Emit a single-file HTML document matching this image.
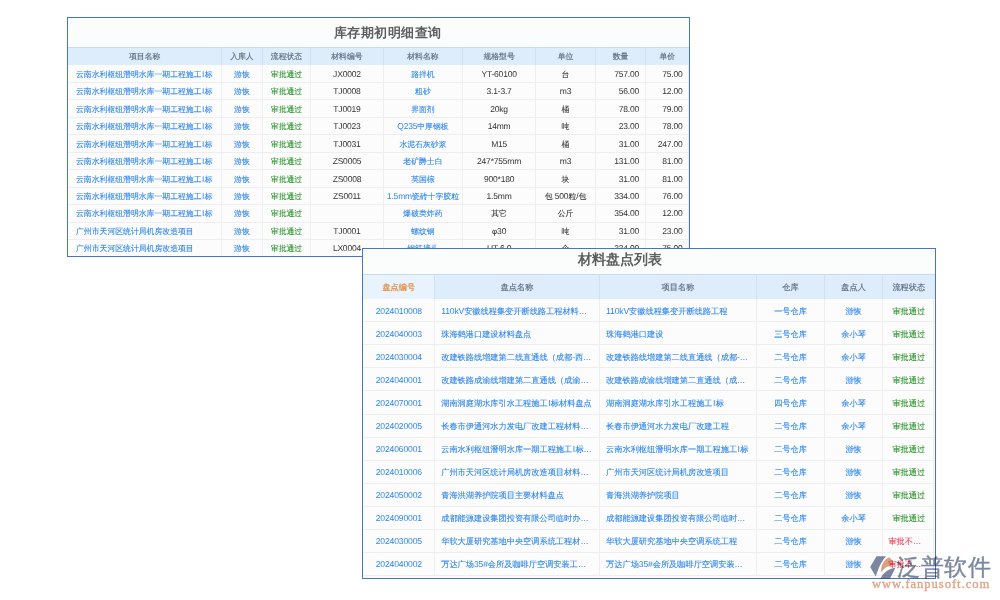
<!DOCTYPE html><html><head><meta charset="utf-8"><style>
*{margin:0;padding:0;box-sizing:border-box}
html,body{width:1000px;height:600px;background:#fff;overflow:hidden;font-family:"Liberation Sans",sans-serif}
.tb{position:absolute;border:1px solid #4673cb;background:#fcfcfc;overflow:hidden}
.tbg{position:absolute;left:0;right:0;top:0;background:#fbfdfd}
.ttl{position:absolute;font-weight:bold;color:#5e5e5e;white-space:nowrap;line-height:1.4}
.hd{position:absolute;left:0;right:0;background:#ddedfb;border-top:1.5px solid #c4dcf3}
.hl{position:absolute;left:0;right:0;height:1px;background:#eeeeee}
.vl{position:absolute;width:1px;background:#efefef}
.vh{position:absolute;width:1px;background:#cfe1f3}
.c{position:absolute;white-space:nowrap;text-rendering:geometricPrecision;-webkit-text-stroke:0.1px currentColor}
.hs{position:absolute;background:#e8f3fd}
.lt{-webkit-text-stroke:0}
.logo{position:absolute;mix-blend-mode:multiply}
</style></head><body>
<div class="tb" style="left:67px;top:17px;width:623px;height:240px">
<div class="tbg" style="height:29px"></div>
<div class="vl" style="left:620px;top:47px;height:191.95px;background:#efefef"></div>
<div class="ttl" style="left:265.5px;top:6.4px;font-size:13.3px;letter-spacing:0.5px">库存期初明细查询</div>
<div class="hd" style="top:29px;height:18px"></div>
<div class="hl" style="top:63.95px"></div>
<div class="hl" style="top:81.40px"></div>
<div class="hl" style="top:98.85px"></div>
<div class="hl" style="top:116.30px"></div>
<div class="hl" style="top:133.75px"></div>
<div class="hl" style="top:151.20px"></div>
<div class="hl" style="top:168.65px"></div>
<div class="hl" style="top:186.10px"></div>
<div class="hl" style="top:203.55px"></div>
<div class="hl" style="top:221.00px"></div>
<div class="hl" style="top:238.45px"></div>
<div class="vl" style="left:152.90px;top:47.00px;height:191.95px"></div>
<div class="vh" style="left:152.90px;top:29px;height:18px"></div>
<div class="vl" style="left:193.90px;top:47.00px;height:191.95px"></div>
<div class="vh" style="left:193.90px;top:29px;height:18px"></div>
<div class="vl" style="left:242.10px;top:47.00px;height:191.95px"></div>
<div class="vh" style="left:242.10px;top:29px;height:18px"></div>
<div class="vl" style="left:314.80px;top:47.00px;height:191.95px"></div>
<div class="vh" style="left:314.80px;top:29px;height:18px"></div>
<div class="vl" style="left:394.10px;top:47.00px;height:191.95px"></div>
<div class="vh" style="left:394.10px;top:29px;height:18px"></div>
<div class="vl" style="left:467.10px;top:47.00px;height:191.95px"></div>
<div class="vh" style="left:467.10px;top:29px;height:18px"></div>
<div class="vl" style="left:527.00px;top:47.00px;height:191.95px"></div>
<div class="vh" style="left:527.00px;top:29px;height:18px"></div>
<div class="vl" style="left:577.10px;top:47.00px;height:191.95px"></div>
<div class="vh" style="left:577.10px;top:29px;height:18px"></div>
<div class="c" style="left:0.00px;width:153.40px;text-align:center;top:29.80px;height:18.00px;line-height:18.00px;color:#627088;font-size:7.85px;letter-spacing:0px;-webkit-text-stroke:0.18px currentColor">项目名称</div>
<div class="c" style="left:153.40px;width:41.00px;text-align:center;top:29.80px;height:18.00px;line-height:18.00px;color:#627088;font-size:7.85px;letter-spacing:0px;-webkit-text-stroke:0.18px currentColor">入库人</div>
<div class="c" style="left:194.40px;width:48.20px;text-align:center;top:29.80px;height:18.00px;line-height:18.00px;color:#627088;font-size:7.85px;letter-spacing:0px;-webkit-text-stroke:0.18px currentColor">流程状态</div>
<div class="c" style="left:242.60px;width:72.70px;text-align:center;top:29.80px;height:18.00px;line-height:18.00px;color:#627088;font-size:7.85px;letter-spacing:0px;-webkit-text-stroke:0.18px currentColor">材料编号</div>
<div class="c" style="left:315.30px;width:79.30px;text-align:center;top:29.80px;height:18.00px;line-height:18.00px;color:#627088;font-size:7.85px;letter-spacing:0px;-webkit-text-stroke:0.18px currentColor">材料名称</div>
<div class="c" style="left:394.60px;width:73.00px;text-align:center;top:29.80px;height:18.00px;line-height:18.00px;color:#627088;font-size:7.85px;letter-spacing:0px;-webkit-text-stroke:0.18px currentColor">规格型号</div>
<div class="c" style="left:467.60px;width:59.90px;text-align:center;top:29.80px;height:18.00px;line-height:18.00px;color:#627088;font-size:7.85px;letter-spacing:0px;-webkit-text-stroke:0.18px currentColor">单位</div>
<div class="c" style="left:527.50px;width:50.10px;text-align:center;top:29.80px;height:18.00px;line-height:18.00px;color:#627088;font-size:7.85px;letter-spacing:0px;-webkit-text-stroke:0.18px currentColor">数量</div>
<div class="c" style="left:577.60px;width:43.40px;text-align:center;top:29.80px;height:18.00px;line-height:18.00px;color:#627088;font-size:7.85px;letter-spacing:0px;-webkit-text-stroke:0.18px currentColor">单价</div>
<div class="c" style="left:8.00px;width:145.40px;text-align:left;top:47.80px;height:17.45px;line-height:17.45px;color:#2f87ee;font-size:7.85px;letter-spacing:0px">云南水利枢纽潛明水库一期工程施工<span class="lt" style="font-size:8.5px;padding:0 0.3px 0 0.5px">I</span>标</div>
<div class="c" style="left:153.40px;width:41.00px;text-align:center;top:47.80px;height:17.45px;line-height:17.45px;color:#2f87ee;font-size:7.85px;letter-spacing:0px">游恢</div>
<div class="c" style="left:194.40px;width:48.20px;text-align:center;top:47.80px;height:17.45px;line-height:17.45px;color:#2f952f;font-size:7.85px;letter-spacing:0px">审批通过</div>
<div class="c" style="left:242.60px;width:72.70px;text-align:center;top:47.80px;height:17.45px;line-height:17.45px;color:#333;font-size:7.85px;letter-spacing:0px;-webkit-text-stroke:0.08px currentColor"><span class="lt" style="font-size:8.5px;letter-spacing:-0.2px">JX0002</span></div>
<div class="c" style="left:315.30px;width:79.30px;text-align:center;top:47.80px;height:17.45px;line-height:17.45px;color:#2f87ee;font-size:7.85px;letter-spacing:0px">路拌机</div>
<div class="c" style="left:394.60px;width:73.00px;text-align:center;top:47.80px;height:17.45px;line-height:17.45px;color:#333;font-size:7.85px;letter-spacing:0px;-webkit-text-stroke:0.08px currentColor"><span class="lt" style="font-size:8.5px;letter-spacing:-0.2px">YT-60100</span></div>
<div class="c" style="left:467.60px;width:59.90px;text-align:center;top:47.80px;height:17.45px;line-height:17.45px;color:#333;font-size:7.85px;letter-spacing:0px;-webkit-text-stroke:0.08px currentColor">台</div>
<div class="c" style="left:527.50px;width:43.60px;text-align:right;top:47.80px;height:17.45px;line-height:17.45px;color:#333;font-size:7.85px;letter-spacing:0px;-webkit-text-stroke:0.08px currentColor"><span class="lt" style="font-size:8.5px;letter-spacing:-0.2px">757.00</span></div>
<div class="c" style="left:577.60px;width:36.90px;text-align:right;top:47.80px;height:17.45px;line-height:17.45px;color:#333;font-size:7.85px;letter-spacing:0px;-webkit-text-stroke:0.08px currentColor"><span class="lt" style="font-size:8.5px;letter-spacing:-0.2px">75.00</span></div>
<div class="c" style="left:8.00px;width:145.40px;text-align:left;top:65.25px;height:17.45px;line-height:17.45px;color:#2f87ee;font-size:7.85px;letter-spacing:0px">云南水利枢纽潛明水库一期工程施工<span class="lt" style="font-size:8.5px;padding:0 0.3px 0 0.5px">I</span>标</div>
<div class="c" style="left:153.40px;width:41.00px;text-align:center;top:65.25px;height:17.45px;line-height:17.45px;color:#2f87ee;font-size:7.85px;letter-spacing:0px">游恢</div>
<div class="c" style="left:194.40px;width:48.20px;text-align:center;top:65.25px;height:17.45px;line-height:17.45px;color:#2f952f;font-size:7.85px;letter-spacing:0px">审批通过</div>
<div class="c" style="left:242.60px;width:72.70px;text-align:center;top:65.25px;height:17.45px;line-height:17.45px;color:#333;font-size:7.85px;letter-spacing:0px;-webkit-text-stroke:0.08px currentColor"><span class="lt" style="font-size:8.5px;letter-spacing:-0.2px">TJ0008</span></div>
<div class="c" style="left:315.30px;width:79.30px;text-align:center;top:65.25px;height:17.45px;line-height:17.45px;color:#2f87ee;font-size:7.85px;letter-spacing:0px">粗砂</div>
<div class="c" style="left:394.60px;width:73.00px;text-align:center;top:65.25px;height:17.45px;line-height:17.45px;color:#333;font-size:7.85px;letter-spacing:0px;-webkit-text-stroke:0.08px currentColor"><span class="lt" style="font-size:8.5px;letter-spacing:-0.2px">3.1-3.7</span></div>
<div class="c" style="left:467.60px;width:59.90px;text-align:center;top:65.25px;height:17.45px;line-height:17.45px;color:#333;font-size:7.85px;letter-spacing:0px;-webkit-text-stroke:0.08px currentColor"><span class="lt" style="font-size:8.5px;letter-spacing:-0.2px">m3</span></div>
<div class="c" style="left:527.50px;width:43.60px;text-align:right;top:65.25px;height:17.45px;line-height:17.45px;color:#333;font-size:7.85px;letter-spacing:0px;-webkit-text-stroke:0.08px currentColor"><span class="lt" style="font-size:8.5px;letter-spacing:-0.2px">56.00</span></div>
<div class="c" style="left:577.60px;width:36.90px;text-align:right;top:65.25px;height:17.45px;line-height:17.45px;color:#333;font-size:7.85px;letter-spacing:0px;-webkit-text-stroke:0.08px currentColor"><span class="lt" style="font-size:8.5px;letter-spacing:-0.2px">12.00</span></div>
<div class="c" style="left:8.00px;width:145.40px;text-align:left;top:82.70px;height:17.45px;line-height:17.45px;color:#2f87ee;font-size:7.85px;letter-spacing:0px">云南水利枢纽潛明水库一期工程施工<span class="lt" style="font-size:8.5px;padding:0 0.3px 0 0.5px">I</span>标</div>
<div class="c" style="left:153.40px;width:41.00px;text-align:center;top:82.70px;height:17.45px;line-height:17.45px;color:#2f87ee;font-size:7.85px;letter-spacing:0px">游恢</div>
<div class="c" style="left:194.40px;width:48.20px;text-align:center;top:82.70px;height:17.45px;line-height:17.45px;color:#2f952f;font-size:7.85px;letter-spacing:0px">审批通过</div>
<div class="c" style="left:242.60px;width:72.70px;text-align:center;top:82.70px;height:17.45px;line-height:17.45px;color:#333;font-size:7.85px;letter-spacing:0px;-webkit-text-stroke:0.08px currentColor"><span class="lt" style="font-size:8.5px;letter-spacing:-0.2px">TJ0019</span></div>
<div class="c" style="left:315.30px;width:79.30px;text-align:center;top:82.70px;height:17.45px;line-height:17.45px;color:#2f87ee;font-size:7.85px;letter-spacing:0px">界面剂</div>
<div class="c" style="left:394.60px;width:73.00px;text-align:center;top:82.70px;height:17.45px;line-height:17.45px;color:#333;font-size:7.85px;letter-spacing:0px;-webkit-text-stroke:0.08px currentColor"><span class="lt" style="font-size:8.5px;letter-spacing:-0.2px">20kg</span></div>
<div class="c" style="left:467.60px;width:59.90px;text-align:center;top:82.70px;height:17.45px;line-height:17.45px;color:#333;font-size:7.85px;letter-spacing:0px;-webkit-text-stroke:0.08px currentColor">桶</div>
<div class="c" style="left:527.50px;width:43.60px;text-align:right;top:82.70px;height:17.45px;line-height:17.45px;color:#333;font-size:7.85px;letter-spacing:0px;-webkit-text-stroke:0.08px currentColor"><span class="lt" style="font-size:8.5px;letter-spacing:-0.2px">78.00</span></div>
<div class="c" style="left:577.60px;width:36.90px;text-align:right;top:82.70px;height:17.45px;line-height:17.45px;color:#333;font-size:7.85px;letter-spacing:0px;-webkit-text-stroke:0.08px currentColor"><span class="lt" style="font-size:8.5px;letter-spacing:-0.2px">79.00</span></div>
<div class="c" style="left:8.00px;width:145.40px;text-align:left;top:100.15px;height:17.45px;line-height:17.45px;color:#2f87ee;font-size:7.85px;letter-spacing:0px">云南水利枢纽潛明水库一期工程施工<span class="lt" style="font-size:8.5px;padding:0 0.3px 0 0.5px">I</span>标</div>
<div class="c" style="left:153.40px;width:41.00px;text-align:center;top:100.15px;height:17.45px;line-height:17.45px;color:#2f87ee;font-size:7.85px;letter-spacing:0px">游恢</div>
<div class="c" style="left:194.40px;width:48.20px;text-align:center;top:100.15px;height:17.45px;line-height:17.45px;color:#2f952f;font-size:7.85px;letter-spacing:0px">审批通过</div>
<div class="c" style="left:242.60px;width:72.70px;text-align:center;top:100.15px;height:17.45px;line-height:17.45px;color:#333;font-size:7.85px;letter-spacing:0px;-webkit-text-stroke:0.08px currentColor"><span class="lt" style="font-size:8.5px;letter-spacing:-0.2px">TJ0023</span></div>
<div class="c" style="left:315.30px;width:79.30px;text-align:center;top:100.15px;height:17.45px;line-height:17.45px;color:#2f87ee;font-size:7.85px;letter-spacing:0px"><span class="lt" style="font-size:8.5px;letter-spacing:-0.2px">Q235</span>中厚钢板</div>
<div class="c" style="left:394.60px;width:73.00px;text-align:center;top:100.15px;height:17.45px;line-height:17.45px;color:#333;font-size:7.85px;letter-spacing:0px;-webkit-text-stroke:0.08px currentColor"><span class="lt" style="font-size:8.5px;letter-spacing:-0.2px">14mm</span></div>
<div class="c" style="left:467.60px;width:59.90px;text-align:center;top:100.15px;height:17.45px;line-height:17.45px;color:#333;font-size:7.85px;letter-spacing:0px;-webkit-text-stroke:0.08px currentColor">吨</div>
<div class="c" style="left:527.50px;width:43.60px;text-align:right;top:100.15px;height:17.45px;line-height:17.45px;color:#333;font-size:7.85px;letter-spacing:0px;-webkit-text-stroke:0.08px currentColor"><span class="lt" style="font-size:8.5px;letter-spacing:-0.2px">23.00</span></div>
<div class="c" style="left:577.60px;width:36.90px;text-align:right;top:100.15px;height:17.45px;line-height:17.45px;color:#333;font-size:7.85px;letter-spacing:0px;-webkit-text-stroke:0.08px currentColor"><span class="lt" style="font-size:8.5px;letter-spacing:-0.2px">78.00</span></div>
<div class="c" style="left:8.00px;width:145.40px;text-align:left;top:117.60px;height:17.45px;line-height:17.45px;color:#2f87ee;font-size:7.85px;letter-spacing:0px">云南水利枢纽潛明水库一期工程施工<span class="lt" style="font-size:8.5px;padding:0 0.3px 0 0.5px">I</span>标</div>
<div class="c" style="left:153.40px;width:41.00px;text-align:center;top:117.60px;height:17.45px;line-height:17.45px;color:#2f87ee;font-size:7.85px;letter-spacing:0px">游恢</div>
<div class="c" style="left:194.40px;width:48.20px;text-align:center;top:117.60px;height:17.45px;line-height:17.45px;color:#2f952f;font-size:7.85px;letter-spacing:0px">审批通过</div>
<div class="c" style="left:242.60px;width:72.70px;text-align:center;top:117.60px;height:17.45px;line-height:17.45px;color:#333;font-size:7.85px;letter-spacing:0px;-webkit-text-stroke:0.08px currentColor"><span class="lt" style="font-size:8.5px;letter-spacing:-0.2px">TJ0031</span></div>
<div class="c" style="left:315.30px;width:79.30px;text-align:center;top:117.60px;height:17.45px;line-height:17.45px;color:#2f87ee;font-size:7.85px;letter-spacing:0px">水泥石灰砂浆</div>
<div class="c" style="left:394.60px;width:73.00px;text-align:center;top:117.60px;height:17.45px;line-height:17.45px;color:#333;font-size:7.85px;letter-spacing:0px;-webkit-text-stroke:0.08px currentColor"><span class="lt" style="font-size:8.5px;letter-spacing:-0.2px">M15</span></div>
<div class="c" style="left:467.60px;width:59.90px;text-align:center;top:117.60px;height:17.45px;line-height:17.45px;color:#333;font-size:7.85px;letter-spacing:0px;-webkit-text-stroke:0.08px currentColor">桶</div>
<div class="c" style="left:527.50px;width:43.60px;text-align:right;top:117.60px;height:17.45px;line-height:17.45px;color:#333;font-size:7.85px;letter-spacing:0px;-webkit-text-stroke:0.08px currentColor"><span class="lt" style="font-size:8.5px;letter-spacing:-0.2px">31.00</span></div>
<div class="c" style="left:577.60px;width:36.90px;text-align:right;top:117.60px;height:17.45px;line-height:17.45px;color:#333;font-size:7.85px;letter-spacing:0px;-webkit-text-stroke:0.08px currentColor"><span class="lt" style="font-size:8.5px;letter-spacing:-0.2px">247.00</span></div>
<div class="c" style="left:8.00px;width:145.40px;text-align:left;top:135.05px;height:17.45px;line-height:17.45px;color:#2f87ee;font-size:7.85px;letter-spacing:0px">云南水利枢纽潛明水库一期工程施工<span class="lt" style="font-size:8.5px;padding:0 0.3px 0 0.5px">I</span>标</div>
<div class="c" style="left:153.40px;width:41.00px;text-align:center;top:135.05px;height:17.45px;line-height:17.45px;color:#2f87ee;font-size:7.85px;letter-spacing:0px">游恢</div>
<div class="c" style="left:194.40px;width:48.20px;text-align:center;top:135.05px;height:17.45px;line-height:17.45px;color:#2f952f;font-size:7.85px;letter-spacing:0px">审批通过</div>
<div class="c" style="left:242.60px;width:72.70px;text-align:center;top:135.05px;height:17.45px;line-height:17.45px;color:#333;font-size:7.85px;letter-spacing:0px;-webkit-text-stroke:0.08px currentColor"><span class="lt" style="font-size:8.5px;letter-spacing:-0.2px">ZS0005</span></div>
<div class="c" style="left:315.30px;width:79.30px;text-align:center;top:135.05px;height:17.45px;line-height:17.45px;color:#2f87ee;font-size:7.85px;letter-spacing:0px">老矿爵士白</div>
<div class="c" style="left:394.60px;width:73.00px;text-align:center;top:135.05px;height:17.45px;line-height:17.45px;color:#333;font-size:7.85px;letter-spacing:0px;-webkit-text-stroke:0.08px currentColor"><span class="lt" style="font-size:8.5px;letter-spacing:-0.2px">247*755mm</span></div>
<div class="c" style="left:467.60px;width:59.90px;text-align:center;top:135.05px;height:17.45px;line-height:17.45px;color:#333;font-size:7.85px;letter-spacing:0px;-webkit-text-stroke:0.08px currentColor"><span class="lt" style="font-size:8.5px;letter-spacing:-0.2px">m3</span></div>
<div class="c" style="left:527.50px;width:43.60px;text-align:right;top:135.05px;height:17.45px;line-height:17.45px;color:#333;font-size:7.85px;letter-spacing:0px;-webkit-text-stroke:0.08px currentColor"><span class="lt" style="font-size:8.5px;letter-spacing:-0.2px">131.00</span></div>
<div class="c" style="left:577.60px;width:36.90px;text-align:right;top:135.05px;height:17.45px;line-height:17.45px;color:#333;font-size:7.85px;letter-spacing:0px;-webkit-text-stroke:0.08px currentColor"><span class="lt" style="font-size:8.5px;letter-spacing:-0.2px">81.00</span></div>
<div class="c" style="left:8.00px;width:145.40px;text-align:left;top:152.50px;height:17.45px;line-height:17.45px;color:#2f87ee;font-size:7.85px;letter-spacing:0px">云南水利枢纽潛明水库一期工程施工<span class="lt" style="font-size:8.5px;padding:0 0.3px 0 0.5px">I</span>标</div>
<div class="c" style="left:153.40px;width:41.00px;text-align:center;top:152.50px;height:17.45px;line-height:17.45px;color:#2f87ee;font-size:7.85px;letter-spacing:0px">游恢</div>
<div class="c" style="left:194.40px;width:48.20px;text-align:center;top:152.50px;height:17.45px;line-height:17.45px;color:#2f952f;font-size:7.85px;letter-spacing:0px">审批通过</div>
<div class="c" style="left:242.60px;width:72.70px;text-align:center;top:152.50px;height:17.45px;line-height:17.45px;color:#333;font-size:7.85px;letter-spacing:0px;-webkit-text-stroke:0.08px currentColor"><span class="lt" style="font-size:8.5px;letter-spacing:-0.2px">ZS0008</span></div>
<div class="c" style="left:315.30px;width:79.30px;text-align:center;top:152.50px;height:17.45px;line-height:17.45px;color:#2f87ee;font-size:7.85px;letter-spacing:0px">英国棕</div>
<div class="c" style="left:394.60px;width:73.00px;text-align:center;top:152.50px;height:17.45px;line-height:17.45px;color:#333;font-size:7.85px;letter-spacing:0px;-webkit-text-stroke:0.08px currentColor"><span class="lt" style="font-size:8.5px;letter-spacing:-0.2px">900*180</span></div>
<div class="c" style="left:467.60px;width:59.90px;text-align:center;top:152.50px;height:17.45px;line-height:17.45px;color:#333;font-size:7.85px;letter-spacing:0px;-webkit-text-stroke:0.08px currentColor">块</div>
<div class="c" style="left:527.50px;width:43.60px;text-align:right;top:152.50px;height:17.45px;line-height:17.45px;color:#333;font-size:7.85px;letter-spacing:0px;-webkit-text-stroke:0.08px currentColor"><span class="lt" style="font-size:8.5px;letter-spacing:-0.2px">31.00</span></div>
<div class="c" style="left:577.60px;width:36.90px;text-align:right;top:152.50px;height:17.45px;line-height:17.45px;color:#333;font-size:7.85px;letter-spacing:0px;-webkit-text-stroke:0.08px currentColor"><span class="lt" style="font-size:8.5px;letter-spacing:-0.2px">81.00</span></div>
<div class="c" style="left:8.00px;width:145.40px;text-align:left;top:169.95px;height:17.45px;line-height:17.45px;color:#2f87ee;font-size:7.85px;letter-spacing:0px">云南水利枢纽潛明水库一期工程施工<span class="lt" style="font-size:8.5px;padding:0 0.3px 0 0.5px">I</span>标</div>
<div class="c" style="left:153.40px;width:41.00px;text-align:center;top:169.95px;height:17.45px;line-height:17.45px;color:#2f87ee;font-size:7.85px;letter-spacing:0px">游恢</div>
<div class="c" style="left:194.40px;width:48.20px;text-align:center;top:169.95px;height:17.45px;line-height:17.45px;color:#2f952f;font-size:7.85px;letter-spacing:0px">审批通过</div>
<div class="c" style="left:242.60px;width:72.70px;text-align:center;top:169.95px;height:17.45px;line-height:17.45px;color:#333;font-size:7.85px;letter-spacing:0px;-webkit-text-stroke:0.08px currentColor"><span class="lt" style="font-size:8.5px;letter-spacing:-0.2px">ZS0011</span></div>
<div class="c" style="left:315.30px;width:79.30px;text-align:center;top:169.95px;height:17.45px;line-height:17.45px;color:#2f87ee;font-size:7.85px;letter-spacing:0px"><span class="lt" style="font-size:8.5px;letter-spacing:-0.2px">1.5mm</span>瓷砖十字胶粒</div>
<div class="c" style="left:394.60px;width:73.00px;text-align:center;top:169.95px;height:17.45px;line-height:17.45px;color:#333;font-size:7.85px;letter-spacing:0px;-webkit-text-stroke:0.08px currentColor"><span class="lt" style="font-size:8.5px;letter-spacing:-0.2px">1.5mm</span></div>
<div class="c" style="left:467.60px;width:59.90px;text-align:center;top:169.95px;height:17.45px;line-height:17.45px;color:#333;font-size:7.85px;letter-spacing:0px;-webkit-text-stroke:0.08px currentColor">包<span class="lt" style="font-size:8.5px;letter-spacing:-0.2px"> 500</span>粒<span class="lt" style="font-size:8.5px;letter-spacing:-0.2px">/</span>包</div>
<div class="c" style="left:527.50px;width:43.60px;text-align:right;top:169.95px;height:17.45px;line-height:17.45px;color:#333;font-size:7.85px;letter-spacing:0px;-webkit-text-stroke:0.08px currentColor"><span class="lt" style="font-size:8.5px;letter-spacing:-0.2px">334.00</span></div>
<div class="c" style="left:577.60px;width:36.90px;text-align:right;top:169.95px;height:17.45px;line-height:17.45px;color:#333;font-size:7.85px;letter-spacing:0px;-webkit-text-stroke:0.08px currentColor"><span class="lt" style="font-size:8.5px;letter-spacing:-0.2px">76.00</span></div>
<div class="c" style="left:8.00px;width:145.40px;text-align:left;top:187.40px;height:17.45px;line-height:17.45px;color:#2f87ee;font-size:7.85px;letter-spacing:0px">云南水利枢纽潛明水库一期工程施工<span class="lt" style="font-size:8.5px;padding:0 0.3px 0 0.5px">I</span>标</div>
<div class="c" style="left:153.40px;width:41.00px;text-align:center;top:187.40px;height:17.45px;line-height:17.45px;color:#2f87ee;font-size:7.85px;letter-spacing:0px">游恢</div>
<div class="c" style="left:194.40px;width:48.20px;text-align:center;top:187.40px;height:17.45px;line-height:17.45px;color:#2f952f;font-size:7.85px;letter-spacing:0px">审批通过</div>
<div class="c" style="left:315.30px;width:79.30px;text-align:center;top:187.40px;height:17.45px;line-height:17.45px;color:#2f87ee;font-size:7.85px;letter-spacing:0px">爆破类炸药</div>
<div class="c" style="left:394.60px;width:73.00px;text-align:center;top:187.40px;height:17.45px;line-height:17.45px;color:#333;font-size:7.85px;letter-spacing:0px;-webkit-text-stroke:0.08px currentColor">其它</div>
<div class="c" style="left:467.60px;width:59.90px;text-align:center;top:187.40px;height:17.45px;line-height:17.45px;color:#333;font-size:7.85px;letter-spacing:0px;-webkit-text-stroke:0.08px currentColor">公斤</div>
<div class="c" style="left:527.50px;width:43.60px;text-align:right;top:187.40px;height:17.45px;line-height:17.45px;color:#333;font-size:7.85px;letter-spacing:0px;-webkit-text-stroke:0.08px currentColor"><span class="lt" style="font-size:8.5px;letter-spacing:-0.2px">354.00</span></div>
<div class="c" style="left:577.60px;width:36.90px;text-align:right;top:187.40px;height:17.45px;line-height:17.45px;color:#333;font-size:7.85px;letter-spacing:0px;-webkit-text-stroke:0.08px currentColor"><span class="lt" style="font-size:8.5px;letter-spacing:-0.2px">12.00</span></div>
<div class="c" style="left:8.00px;width:145.40px;text-align:left;top:204.85px;height:17.45px;line-height:17.45px;color:#2f87ee;font-size:7.85px;letter-spacing:0px">广州市天河区统计局机房改造项目</div>
<div class="c" style="left:153.40px;width:41.00px;text-align:center;top:204.85px;height:17.45px;line-height:17.45px;color:#2f87ee;font-size:7.85px;letter-spacing:0px">游恢</div>
<div class="c" style="left:194.40px;width:48.20px;text-align:center;top:204.85px;height:17.45px;line-height:17.45px;color:#2f952f;font-size:7.85px;letter-spacing:0px">审批通过</div>
<div class="c" style="left:242.60px;width:72.70px;text-align:center;top:204.85px;height:17.45px;line-height:17.45px;color:#333;font-size:7.85px;letter-spacing:0px;-webkit-text-stroke:0.08px currentColor"><span class="lt" style="font-size:8.5px;letter-spacing:-0.2px">TJ0001</span></div>
<div class="c" style="left:315.30px;width:79.30px;text-align:center;top:204.85px;height:17.45px;line-height:17.45px;color:#2f87ee;font-size:7.85px;letter-spacing:0px">螺纹钢</div>
<div class="c" style="left:394.60px;width:73.00px;text-align:center;top:204.85px;height:17.45px;line-height:17.45px;color:#333;font-size:7.85px;letter-spacing:0px;-webkit-text-stroke:0.08px currentColor">φ<span class="lt" style="font-size:8.5px;letter-spacing:-0.2px">30</span></div>
<div class="c" style="left:467.60px;width:59.90px;text-align:center;top:204.85px;height:17.45px;line-height:17.45px;color:#333;font-size:7.85px;letter-spacing:0px;-webkit-text-stroke:0.08px currentColor">吨</div>
<div class="c" style="left:527.50px;width:43.60px;text-align:right;top:204.85px;height:17.45px;line-height:17.45px;color:#333;font-size:7.85px;letter-spacing:0px;-webkit-text-stroke:0.08px currentColor"><span class="lt" style="font-size:8.5px;letter-spacing:-0.2px">31.00</span></div>
<div class="c" style="left:577.60px;width:36.90px;text-align:right;top:204.85px;height:17.45px;line-height:17.45px;color:#333;font-size:7.85px;letter-spacing:0px;-webkit-text-stroke:0.08px currentColor"><span class="lt" style="font-size:8.5px;letter-spacing:-0.2px">23.00</span></div>
<div class="c" style="left:8.00px;width:145.40px;text-align:left;top:222.30px;height:17.45px;line-height:17.45px;color:#2f87ee;font-size:7.85px;letter-spacing:0px">广州市天河区统计局机房改造项目</div>
<div class="c" style="left:153.40px;width:41.00px;text-align:center;top:222.30px;height:17.45px;line-height:17.45px;color:#2f87ee;font-size:7.85px;letter-spacing:0px">游恢</div>
<div class="c" style="left:194.40px;width:48.20px;text-align:center;top:222.30px;height:17.45px;line-height:17.45px;color:#2f952f;font-size:7.85px;letter-spacing:0px">审批通过</div>
<div class="c" style="left:242.60px;width:72.70px;text-align:center;top:222.30px;height:17.45px;line-height:17.45px;color:#333;font-size:7.85px;letter-spacing:0px;-webkit-text-stroke:0.08px currentColor"><span class="lt" style="font-size:8.5px;letter-spacing:-0.2px">LX0004</span></div>
<div class="c" style="left:315.30px;width:79.30px;text-align:center;top:222.30px;height:17.45px;line-height:17.45px;color:#2f87ee;font-size:7.85px;letter-spacing:0px">钢筋接头</div>
<div class="c" style="left:394.60px;width:73.00px;text-align:center;top:222.30px;height:17.45px;line-height:17.45px;color:#333;font-size:7.85px;letter-spacing:0px;-webkit-text-stroke:0.08px currentColor"><span class="lt" style="font-size:8.5px;letter-spacing:-0.2px">UT 6.0</span></div>
<div class="c" style="left:467.60px;width:59.90px;text-align:center;top:222.30px;height:17.45px;line-height:17.45px;color:#333;font-size:7.85px;letter-spacing:0px;-webkit-text-stroke:0.08px currentColor">个</div>
<div class="c" style="left:527.50px;width:43.60px;text-align:right;top:222.30px;height:17.45px;line-height:17.45px;color:#333;font-size:7.85px;letter-spacing:0px;-webkit-text-stroke:0.08px currentColor"><span class="lt" style="font-size:8.5px;letter-spacing:-0.2px">334.00</span></div>
<div class="c" style="left:577.60px;width:36.90px;text-align:right;top:222.30px;height:17.45px;line-height:17.45px;color:#333;font-size:7.85px;letter-spacing:0px;-webkit-text-stroke:0.08px currentColor"><span class="lt" style="font-size:8.5px;letter-spacing:-0.2px">75.00</span></div>
</div>
<div class="tb" style="left:362px;top:248px;width:574px;height:331px">
<div class="tbg" style="height:25.3px"></div>
<div class="vl" style="left:569.5px;top:49.6px;height:276.96px;background:#efefef"></div>
<div class="ttl" style="left:214.7px;top:1.4px;font-size:13.8px;letter-spacing:0px">材料盘点列表</div>
<div class="hd" style="top:25.3px;height:24.3px"></div>
<div class="hs" style="left:0px;width:71.6px;top:26.3px;height:23.3px"></div>
<div class="hl" style="top:72.18px"></div>
<div class="hl" style="top:95.26px"></div>
<div class="hl" style="top:118.34px"></div>
<div class="hl" style="top:141.42px"></div>
<div class="hl" style="top:164.50px"></div>
<div class="hl" style="top:187.58px"></div>
<div class="hl" style="top:210.66px"></div>
<div class="hl" style="top:233.74px"></div>
<div class="hl" style="top:256.82px"></div>
<div class="hl" style="top:279.90px"></div>
<div class="hl" style="top:302.98px"></div>
<div class="hl" style="top:326.06px"></div>
<div class="vl" style="left:71.10px;top:49.60px;height:276.96px"></div>
<div class="vh" style="left:71.10px;top:25.3px;height:24.3px"></div>
<div class="vl" style="left:236.00px;top:49.60px;height:276.96px"></div>
<div class="vh" style="left:236.00px;top:25.3px;height:24.3px"></div>
<div class="vl" style="left:392.90px;top:49.60px;height:276.96px"></div>
<div class="vh" style="left:392.90px;top:25.3px;height:24.3px"></div>
<div class="vl" style="left:461.20px;top:49.60px;height:276.96px"></div>
<div class="vh" style="left:461.20px;top:25.3px;height:24.3px"></div>
<div class="vl" style="left:519.00px;top:49.60px;height:276.96px"></div>
<div class="vh" style="left:519.00px;top:25.3px;height:24.3px"></div>
<div class="c" style="left:0.00px;width:71.60px;text-align:center;top:26.80px;height:24.30px;line-height:24.30px;color:#e0883a;font-size:8.2px;letter-spacing:0px;-webkit-text-stroke:0.18px currentColor">盘点编号</div>
<div class="c" style="left:71.60px;width:164.90px;text-align:center;top:26.80px;height:24.30px;line-height:24.30px;color:#627088;font-size:8.2px;letter-spacing:0px;-webkit-text-stroke:0.18px currentColor">盘点名称</div>
<div class="c" style="left:236.50px;width:156.90px;text-align:center;top:26.80px;height:24.30px;line-height:24.30px;color:#627088;font-size:8.2px;letter-spacing:0px;-webkit-text-stroke:0.18px currentColor">项目名称</div>
<div class="c" style="left:393.40px;width:68.30px;text-align:center;top:26.80px;height:24.30px;line-height:24.30px;color:#627088;font-size:8.2px;letter-spacing:0px;-webkit-text-stroke:0.18px currentColor">仓库</div>
<div class="c" style="left:461.70px;width:57.80px;text-align:center;top:26.80px;height:24.30px;line-height:24.30px;color:#627088;font-size:8.2px;letter-spacing:0px;-webkit-text-stroke:0.18px currentColor">盘点人</div>
<div class="c" style="left:519.50px;width:52.50px;text-align:center;top:26.80px;height:24.30px;line-height:24.30px;color:#627088;font-size:8.2px;letter-spacing:0px;-webkit-text-stroke:0.18px currentColor">流程状态</div>
<div class="c" style="left:0.00px;width:71.60px;text-align:center;top:50.60px;height:23.08px;line-height:23.08px;color:#2f87ee;font-size:8.2px;letter-spacing:0px"><span class="lt" style="font-size:8.6px;letter-spacing:-0.15px">2024010008</span></div>
<div class="c" style="left:78.20px;width:158.30px;text-align:left;top:50.60px;height:23.08px;line-height:23.08px;color:#2f87ee;font-size:8.2px;letter-spacing:0px"><span class="lt" style="font-size:8.6px;letter-spacing:-0.15px">110kV</span>安徽线程集变开断线路工程材料…</div>
<div class="c" style="left:243.10px;width:150.30px;text-align:left;top:50.60px;height:23.08px;line-height:23.08px;color:#2f87ee;font-size:8.2px;letter-spacing:0px"><span class="lt" style="font-size:8.6px;letter-spacing:-0.15px">110kV</span>安徽线程集变开断线路工程</div>
<div class="c" style="left:393.40px;width:68.30px;text-align:center;top:50.60px;height:23.08px;line-height:23.08px;color:#2f87ee;font-size:8.2px;letter-spacing:0px">一号仓库</div>
<div class="c" style="left:461.70px;width:57.80px;text-align:center;top:50.60px;height:23.08px;line-height:23.08px;color:#2f87ee;font-size:8.2px;letter-spacing:0px">游恢</div>
<div class="c" style="left:519.50px;width:52.50px;text-align:center;top:50.60px;height:23.08px;line-height:23.08px;color:#2f952f;font-size:8.2px;letter-spacing:0px">审批通过</div>
<div class="c" style="left:0.00px;width:71.60px;text-align:center;top:73.68px;height:23.08px;line-height:23.08px;color:#2f87ee;font-size:8.2px;letter-spacing:0px"><span class="lt" style="font-size:8.6px;letter-spacing:-0.15px">2024040003</span></div>
<div class="c" style="left:78.20px;width:158.30px;text-align:left;top:73.68px;height:23.08px;line-height:23.08px;color:#2f87ee;font-size:8.2px;letter-spacing:0px">珠海鹤港口建设材料盘点</div>
<div class="c" style="left:243.10px;width:150.30px;text-align:left;top:73.68px;height:23.08px;line-height:23.08px;color:#2f87ee;font-size:8.2px;letter-spacing:0px">珠海鹤港口建设</div>
<div class="c" style="left:393.40px;width:68.30px;text-align:center;top:73.68px;height:23.08px;line-height:23.08px;color:#2f87ee;font-size:8.2px;letter-spacing:0px">三号仓库</div>
<div class="c" style="left:461.70px;width:57.80px;text-align:center;top:73.68px;height:23.08px;line-height:23.08px;color:#2f87ee;font-size:8.2px;letter-spacing:0px">余小琴</div>
<div class="c" style="left:519.50px;width:52.50px;text-align:center;top:73.68px;height:23.08px;line-height:23.08px;color:#2f952f;font-size:8.2px;letter-spacing:0px">审批通过</div>
<div class="c" style="left:0.00px;width:71.60px;text-align:center;top:96.76px;height:23.08px;line-height:23.08px;color:#2f87ee;font-size:8.2px;letter-spacing:0px"><span class="lt" style="font-size:8.6px;letter-spacing:-0.15px">2024030004</span></div>
<div class="c" style="left:78.20px;width:158.30px;text-align:left;top:96.76px;height:23.08px;line-height:23.08px;color:#2f87ee;font-size:8.2px;letter-spacing:0px">改建铁路线增建第二线直通线（成都<span class="lt" style="font-size:8.6px;letter-spacing:-0.15px">-</span>西…</div>
<div class="c" style="left:243.10px;width:150.30px;text-align:left;top:96.76px;height:23.08px;line-height:23.08px;color:#2f87ee;font-size:8.2px;letter-spacing:0px">改建铁路线增建第二线直通线（成都<span class="lt" style="font-size:8.6px;letter-spacing:-0.15px">-</span>…</div>
<div class="c" style="left:393.40px;width:68.30px;text-align:center;top:96.76px;height:23.08px;line-height:23.08px;color:#2f87ee;font-size:8.2px;letter-spacing:0px">二号仓库</div>
<div class="c" style="left:461.70px;width:57.80px;text-align:center;top:96.76px;height:23.08px;line-height:23.08px;color:#2f87ee;font-size:8.2px;letter-spacing:0px">余小琴</div>
<div class="c" style="left:519.50px;width:52.50px;text-align:center;top:96.76px;height:23.08px;line-height:23.08px;color:#2f952f;font-size:8.2px;letter-spacing:0px">审批通过</div>
<div class="c" style="left:0.00px;width:71.60px;text-align:center;top:119.84px;height:23.08px;line-height:23.08px;color:#2f87ee;font-size:8.2px;letter-spacing:0px"><span class="lt" style="font-size:8.6px;letter-spacing:-0.15px">2024040001</span></div>
<div class="c" style="left:78.20px;width:158.30px;text-align:left;top:119.84px;height:23.08px;line-height:23.08px;color:#2f87ee;font-size:8.2px;letter-spacing:0px">改建铁路成渝线增建第二直通线（成渝…</div>
<div class="c" style="left:243.10px;width:150.30px;text-align:left;top:119.84px;height:23.08px;line-height:23.08px;color:#2f87ee;font-size:8.2px;letter-spacing:0px">改建铁路成渝线增建第二直通线（成…</div>
<div class="c" style="left:393.40px;width:68.30px;text-align:center;top:119.84px;height:23.08px;line-height:23.08px;color:#2f87ee;font-size:8.2px;letter-spacing:0px">二号仓库</div>
<div class="c" style="left:461.70px;width:57.80px;text-align:center;top:119.84px;height:23.08px;line-height:23.08px;color:#2f87ee;font-size:8.2px;letter-spacing:0px">游恢</div>
<div class="c" style="left:519.50px;width:52.50px;text-align:center;top:119.84px;height:23.08px;line-height:23.08px;color:#2f952f;font-size:8.2px;letter-spacing:0px">审批通过</div>
<div class="c" style="left:0.00px;width:71.60px;text-align:center;top:142.92px;height:23.08px;line-height:23.08px;color:#2f87ee;font-size:8.2px;letter-spacing:0px"><span class="lt" style="font-size:8.6px;letter-spacing:-0.15px">2024070001</span></div>
<div class="c" style="left:78.20px;width:158.30px;text-align:left;top:142.92px;height:23.08px;line-height:23.08px;color:#2f87ee;font-size:8.2px;letter-spacing:0px">湖南洞庭湖水库引水工程施工<span class="lt" style="font-size:8.6px;padding:0 0.3px 0 0.5px">I</span>标材料盘点</div>
<div class="c" style="left:243.10px;width:150.30px;text-align:left;top:142.92px;height:23.08px;line-height:23.08px;color:#2f87ee;font-size:8.2px;letter-spacing:0px">湖南洞庭湖水库引水工程施工<span class="lt" style="font-size:8.6px;padding:0 0.3px 0 0.5px">I</span>标</div>
<div class="c" style="left:393.40px;width:68.30px;text-align:center;top:142.92px;height:23.08px;line-height:23.08px;color:#2f87ee;font-size:8.2px;letter-spacing:0px">四号仓库</div>
<div class="c" style="left:461.70px;width:57.80px;text-align:center;top:142.92px;height:23.08px;line-height:23.08px;color:#2f87ee;font-size:8.2px;letter-spacing:0px">余小琴</div>
<div class="c" style="left:519.50px;width:52.50px;text-align:center;top:142.92px;height:23.08px;line-height:23.08px;color:#2f952f;font-size:8.2px;letter-spacing:0px">审批通过</div>
<div class="c" style="left:0.00px;width:71.60px;text-align:center;top:166.00px;height:23.08px;line-height:23.08px;color:#2f87ee;font-size:8.2px;letter-spacing:0px"><span class="lt" style="font-size:8.6px;letter-spacing:-0.15px">2024020005</span></div>
<div class="c" style="left:78.20px;width:158.30px;text-align:left;top:166.00px;height:23.08px;line-height:23.08px;color:#2f87ee;font-size:8.2px;letter-spacing:0px">长春市伊通河水力发电厂改建工程材料…</div>
<div class="c" style="left:243.10px;width:150.30px;text-align:left;top:166.00px;height:23.08px;line-height:23.08px;color:#2f87ee;font-size:8.2px;letter-spacing:0px">长春市伊通河水力发电厂改建工程</div>
<div class="c" style="left:393.40px;width:68.30px;text-align:center;top:166.00px;height:23.08px;line-height:23.08px;color:#2f87ee;font-size:8.2px;letter-spacing:0px">二号仓库</div>
<div class="c" style="left:461.70px;width:57.80px;text-align:center;top:166.00px;height:23.08px;line-height:23.08px;color:#2f87ee;font-size:8.2px;letter-spacing:0px">余小琴</div>
<div class="c" style="left:519.50px;width:52.50px;text-align:center;top:166.00px;height:23.08px;line-height:23.08px;color:#2f952f;font-size:8.2px;letter-spacing:0px">审批通过</div>
<div class="c" style="left:0.00px;width:71.60px;text-align:center;top:189.08px;height:23.08px;line-height:23.08px;color:#2f87ee;font-size:8.2px;letter-spacing:0px"><span class="lt" style="font-size:8.6px;letter-spacing:-0.15px">2024060001</span></div>
<div class="c" style="left:78.20px;width:158.30px;text-align:left;top:189.08px;height:23.08px;line-height:23.08px;color:#2f87ee;font-size:8.2px;letter-spacing:0px">云南水利枢纽潛明水库一期工程施工<span class="lt" style="font-size:8.6px;padding:0 0.3px 0 0.5px">I</span>标…</div>
<div class="c" style="left:243.10px;width:150.30px;text-align:left;top:189.08px;height:23.08px;line-height:23.08px;color:#2f87ee;font-size:8.2px;letter-spacing:0px">云南水利枢纽潛明水库一期工程施工<span class="lt" style="font-size:8.6px;padding:0 0.3px 0 0.5px">I</span>标</div>
<div class="c" style="left:393.40px;width:68.30px;text-align:center;top:189.08px;height:23.08px;line-height:23.08px;color:#2f87ee;font-size:8.2px;letter-spacing:0px">二号仓库</div>
<div class="c" style="left:461.70px;width:57.80px;text-align:center;top:189.08px;height:23.08px;line-height:23.08px;color:#2f87ee;font-size:8.2px;letter-spacing:0px">游恢</div>
<div class="c" style="left:519.50px;width:52.50px;text-align:center;top:189.08px;height:23.08px;line-height:23.08px;color:#2f952f;font-size:8.2px;letter-spacing:0px">审批通过</div>
<div class="c" style="left:0.00px;width:71.60px;text-align:center;top:212.16px;height:23.08px;line-height:23.08px;color:#2f87ee;font-size:8.2px;letter-spacing:0px"><span class="lt" style="font-size:8.6px;letter-spacing:-0.15px">2024010006</span></div>
<div class="c" style="left:78.20px;width:158.30px;text-align:left;top:212.16px;height:23.08px;line-height:23.08px;color:#2f87ee;font-size:8.2px;letter-spacing:0px">广州市天河区统计局机房改造项目材料…</div>
<div class="c" style="left:243.10px;width:150.30px;text-align:left;top:212.16px;height:23.08px;line-height:23.08px;color:#2f87ee;font-size:8.2px;letter-spacing:0px">广州市天河区统计局机房改造项目</div>
<div class="c" style="left:393.40px;width:68.30px;text-align:center;top:212.16px;height:23.08px;line-height:23.08px;color:#2f87ee;font-size:8.2px;letter-spacing:0px">二号仓库</div>
<div class="c" style="left:461.70px;width:57.80px;text-align:center;top:212.16px;height:23.08px;line-height:23.08px;color:#2f87ee;font-size:8.2px;letter-spacing:0px">游恢</div>
<div class="c" style="left:519.50px;width:52.50px;text-align:center;top:212.16px;height:23.08px;line-height:23.08px;color:#2f952f;font-size:8.2px;letter-spacing:0px">审批通过</div>
<div class="c" style="left:0.00px;width:71.60px;text-align:center;top:235.24px;height:23.08px;line-height:23.08px;color:#2f87ee;font-size:8.2px;letter-spacing:0px"><span class="lt" style="font-size:8.6px;letter-spacing:-0.15px">2024050002</span></div>
<div class="c" style="left:78.20px;width:158.30px;text-align:left;top:235.24px;height:23.08px;line-height:23.08px;color:#2f87ee;font-size:8.2px;letter-spacing:0px">青海洪湖养护院项目主要材料盘点</div>
<div class="c" style="left:243.10px;width:150.30px;text-align:left;top:235.24px;height:23.08px;line-height:23.08px;color:#2f87ee;font-size:8.2px;letter-spacing:0px">青海洪湖养护院项目</div>
<div class="c" style="left:393.40px;width:68.30px;text-align:center;top:235.24px;height:23.08px;line-height:23.08px;color:#2f87ee;font-size:8.2px;letter-spacing:0px">二号仓库</div>
<div class="c" style="left:461.70px;width:57.80px;text-align:center;top:235.24px;height:23.08px;line-height:23.08px;color:#2f87ee;font-size:8.2px;letter-spacing:0px">游恢</div>
<div class="c" style="left:519.50px;width:52.50px;text-align:center;top:235.24px;height:23.08px;line-height:23.08px;color:#2f952f;font-size:8.2px;letter-spacing:0px">审批通过</div>
<div class="c" style="left:0.00px;width:71.60px;text-align:center;top:258.32px;height:23.08px;line-height:23.08px;color:#2f87ee;font-size:8.2px;letter-spacing:0px"><span class="lt" style="font-size:8.6px;letter-spacing:-0.15px">2024090001</span></div>
<div class="c" style="left:78.20px;width:158.30px;text-align:left;top:258.32px;height:23.08px;line-height:23.08px;color:#2f87ee;font-size:8.2px;letter-spacing:0px">成都能源建设集团投资有限公司临时办…</div>
<div class="c" style="left:243.10px;width:150.30px;text-align:left;top:258.32px;height:23.08px;line-height:23.08px;color:#2f87ee;font-size:8.2px;letter-spacing:0px">成都能源建设集团投资有限公司临时…</div>
<div class="c" style="left:393.40px;width:68.30px;text-align:center;top:258.32px;height:23.08px;line-height:23.08px;color:#2f87ee;font-size:8.2px;letter-spacing:0px">二号仓库</div>
<div class="c" style="left:461.70px;width:57.80px;text-align:center;top:258.32px;height:23.08px;line-height:23.08px;color:#2f87ee;font-size:8.2px;letter-spacing:0px">余小琴</div>
<div class="c" style="left:519.50px;width:52.50px;text-align:center;top:258.32px;height:23.08px;line-height:23.08px;color:#2f952f;font-size:8.2px;letter-spacing:0px">审批通过</div>
<div class="c" style="left:0.00px;width:71.60px;text-align:center;top:281.40px;height:23.08px;line-height:23.08px;color:#2f87ee;font-size:8.2px;letter-spacing:0px"><span class="lt" style="font-size:8.6px;letter-spacing:-0.15px">2024030005</span></div>
<div class="c" style="left:78.20px;width:158.30px;text-align:left;top:281.40px;height:23.08px;line-height:23.08px;color:#2f87ee;font-size:8.2px;letter-spacing:0px">华软大厦研究基地中央空调系统工程材…</div>
<div class="c" style="left:243.10px;width:150.30px;text-align:left;top:281.40px;height:23.08px;line-height:23.08px;color:#2f87ee;font-size:8.2px;letter-spacing:0px">华软大厦研究基地中央空调系统工程</div>
<div class="c" style="left:393.40px;width:68.30px;text-align:center;top:281.40px;height:23.08px;line-height:23.08px;color:#2f87ee;font-size:8.2px;letter-spacing:0px">二号仓库</div>
<div class="c" style="left:461.70px;width:57.80px;text-align:center;top:281.40px;height:23.08px;line-height:23.08px;color:#2f87ee;font-size:8.2px;letter-spacing:0px">游恢</div>
<div class="c" style="left:512.50px;width:58.50px;text-align:center;top:281.40px;height:23.08px;line-height:23.08px;color:#f23d55;font-size:8.2px;letter-spacing:0px">审批不…</div>
<div class="c" style="left:0.00px;width:71.60px;text-align:center;top:304.48px;height:23.08px;line-height:23.08px;color:#2f87ee;font-size:8.2px;letter-spacing:0px"><span class="lt" style="font-size:8.6px;letter-spacing:-0.15px">2024040002</span></div>
<div class="c" style="left:78.20px;width:158.30px;text-align:left;top:304.48px;height:23.08px;line-height:23.08px;color:#2f87ee;font-size:8.2px;letter-spacing:0px">万达广场<span class="lt" style="font-size:8.6px;letter-spacing:-0.15px">35#</span>会所及咖啡厅空调安装工…</div>
<div class="c" style="left:243.10px;width:150.30px;text-align:left;top:304.48px;height:23.08px;line-height:23.08px;color:#2f87ee;font-size:8.2px;letter-spacing:0px">万达广场<span class="lt" style="font-size:8.6px;letter-spacing:-0.15px">35#</span>会所及咖啡厅空调安装…</div>
<div class="c" style="left:393.40px;width:68.30px;text-align:center;top:304.48px;height:23.08px;line-height:23.08px;color:#2f87ee;font-size:8.2px;letter-spacing:0px">二号仓库</div>
<div class="c" style="left:461.70px;width:57.80px;text-align:center;top:304.48px;height:23.08px;line-height:23.08px;color:#2f87ee;font-size:8.2px;letter-spacing:0px">游恢</div>
<div class="c" style="left:512.50px;width:58.50px;text-align:center;top:304.48px;height:23.08px;line-height:23.08px;color:#f23d55;font-size:8.2px;letter-spacing:0px">审批不…</div>
</div>

<svg class="logo" style="left:866px;top:552px" width="32" height="30" viewBox="0 0 32 30">
 <path d="M10.5 4.2 L20 4.2 Q13.5 11 9.8 24.6 L4.2 15 Z" fill="#7d89a1"/>
 <path d="M14.8 20.2 Q15.5 8 23.4 5.2 Q26.5 7.5 28 12.6 Q20 14 14.8 20.2 Z" fill="#dfa182"/>
 <path d="M14.2 26.4 Q18.5 17.5 29.6 15.4 L24 26.4 Z" fill="#7d89a1"/>
</svg>
<div class="logo" style="left:897px;top:552px;font-size:23px;line-height:30px;color:#7b88a0;letter-spacing:0.5px;white-space:nowrap;-webkit-text-stroke:0.4px #7b88a0">泛普软件</div>
<div class="logo" style="left:872px;top:576px;font-family:'Liberation Serif',serif;font-size:12.6px;line-height:16px;color:#e0a488;letter-spacing:0.95px;-webkit-text-stroke:0.35px #e0a488;white-space:nowrap">www.fanpusoft.com</div>

</body></html>
